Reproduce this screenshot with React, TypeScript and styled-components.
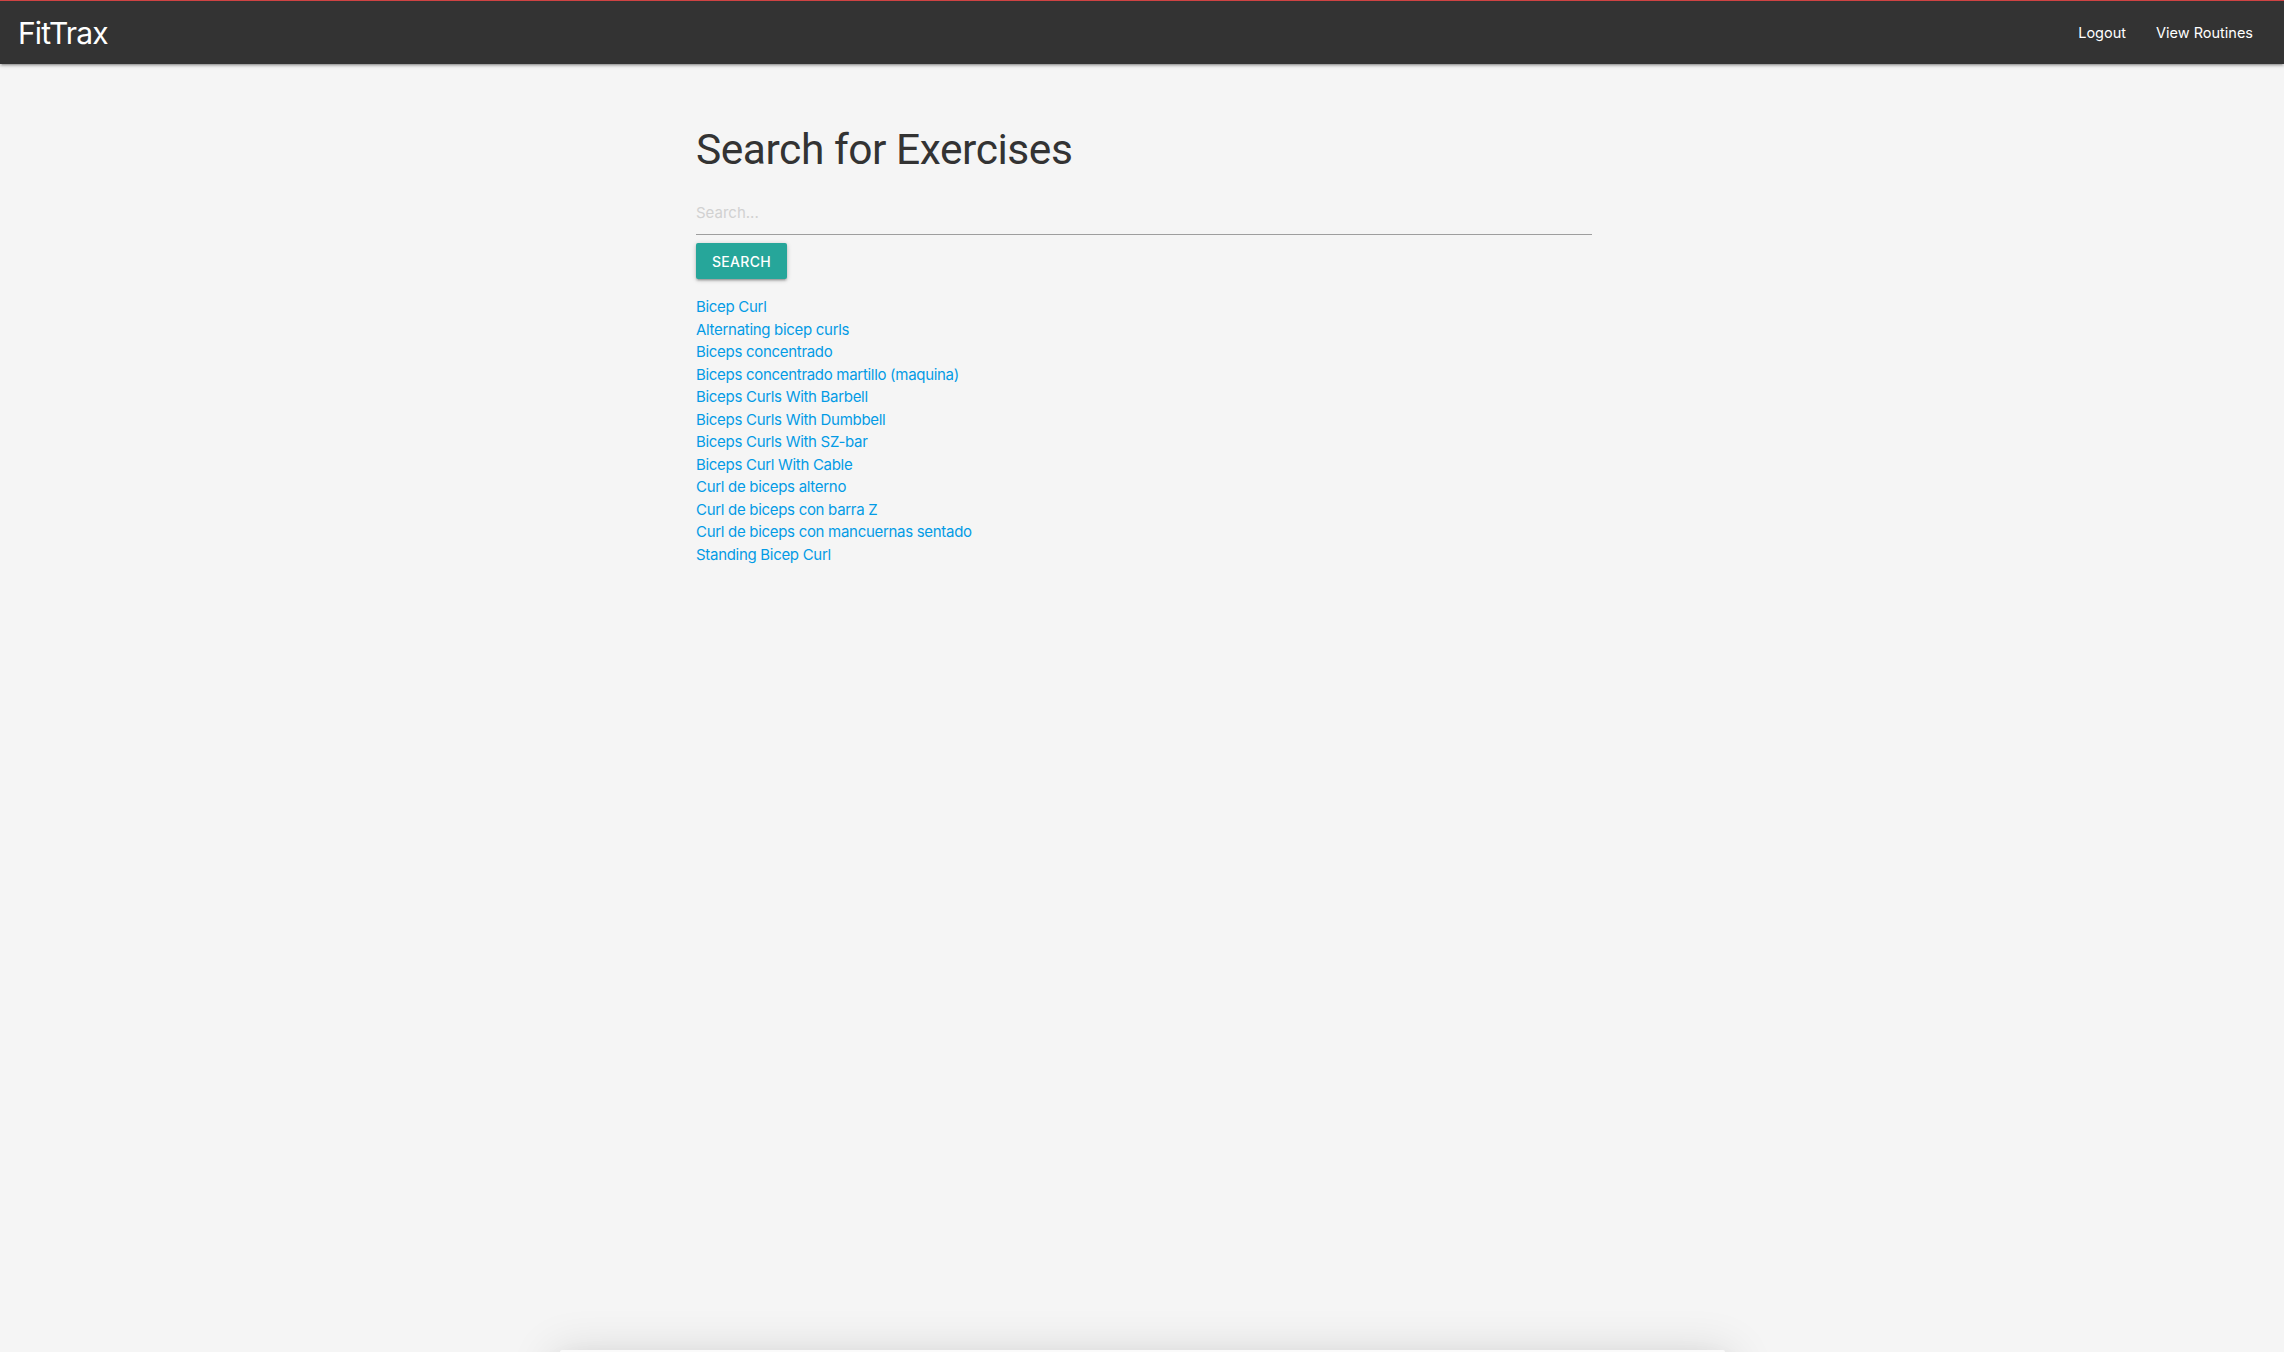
import React, { useState } from 'react';
import styled, { createGlobalStyle } from 'styled-components';

const GlobalStyle = createGlobalStyle`
    html, body {
        margin: 0;
        padding: 0;
        background: #f5f5f5;
        font-family: Inter, "Noto Sans", Roboto, sans-serif;
        font-size: 15px;
        color: rgba(0, 0, 0, 0.87);
    }
    * {
        box-sizing: border-box;
    }
`;

const Nav = styled.nav`
    height: 64px;
    background: #333333;
    border-top: 1px solid #cf4343;
    display: flex;
    align-items: center;
    justify-content: space-between;
    padding: 0 16px 0 18px;
    box-shadow: 0 2px 2px 0 rgba(0, 0, 0, 0.14), 0 3px 1px -2px rgba(0, 0, 0, 0.12), 0 1px 5px 0 rgba(0, 0, 0, 0.2);
    position: relative;
    z-index: 2;
`;

const Brand = styled.a`
    color: #ffffff;
    font-size: 30px;
    font-weight: 400;
    text-decoration: none;
    letter-spacing: -0.9px;
`;

const NavLinks = styled.ul`
    list-style: none;
    margin: 0;
    padding: 0;
    display: flex;
`;

const NavLink = styled.a`
    display: block;
    color: #ffffff;
    font-size: 14.5px;
    padding: 0 15px;
    line-height: 64px;
    text-decoration: none;
`;

const Container = styled.main`
    width: 896px;
    margin-left: calc(50% - 446px);
    padding-top: 62px;
`;

const Title = styled.h4`
    font-family: Roboto, Inter, sans-serif;
    font-size: 42.5px;
    font-weight: 400;
    line-height: 48px;
    letter-spacing: -0.45px;
    color: #333333;
    margin: 0 0 16px 0;
`;

const SearchInput = styled.input`
    display: block;
    width: 100%;
    height: 45px;
    border: none;
    border-bottom: 1px solid #9e9e9e;
    background: transparent;
    font-family: inherit;
    font-size: 15px;
    color: #333;
    outline: none;
    padding: 0;
    margin: 0 0 8px 0;
    &::placeholder {
        color: #d1d1d1;
    }
`;

const Button = styled.button`
    height: 36px;
    padding: 0 16px;
    border: none;
    border-radius: 2px;
    background: #26a69a;
    color: #ffffff;
    font-family: inherit;
    font-size: 14px;
    font-weight: 500;
    letter-spacing: 0.3px;
    text-transform: uppercase;
    cursor: pointer;
    box-shadow: 0 2px 2px 0 rgba(0, 0, 0, 0.14), 0 3px 1px -2px rgba(0, 0, 0, 0.12), 0 1px 5px 0 rgba(0, 0, 0, 0.2);
`;

const ResultList = styled.ul`
    list-style: none;
    margin: 17px 0 0 0;
    padding: 0;
`;

const ResultItem = styled.li`
    line-height: 22.5px;
`;

const ResultLink = styled.a`
    color: #039be5;
    font-size: 15px;
    letter-spacing: -0.3px;
    text-decoration: none;
`;

const HiddenModal = styled.div`
    position: fixed;
    top: 1350px;
    left: 50%;
    width: 1165px;
    height: 400px;
    margin-left: -582px;
    background: #fafafa;
    border-radius: 2px;
    box-shadow: 0 24px 38px 3px rgba(0, 0, 0, 0.14), 0 9px 46px 8px rgba(0, 0, 0, 0.12), 0 11px 15px -7px rgba(0, 0, 0, 0.2);
`;

const exercises = [
    'Bicep Curl',
    'Alternating bicep curls',
    'Biceps concentrado',
    'Biceps concentrado martillo (maquina)',
    'Biceps Curls With Barbell',
    'Biceps Curls With Dumbbell',
    'Biceps Curls With SZ-bar',
    'Biceps Curl With Cable',
    'Curl de biceps alterno',
    'Curl de biceps con barra Z',
    'Curl de biceps con mancuernas sentado',
    'Standing Bicep Curl',
];

const App: React.FC = () => {
    const [query, setQuery] = useState('');

    return (
        <>
            <GlobalStyle />
            <Nav>
                <Brand href="#">FitTrax</Brand>
                <NavLinks>
                    <li><NavLink href="#">Logout</NavLink></li>
                    <li><NavLink href="#">View Routines</NavLink></li>
                </NavLinks>
            </Nav>

            <Container>
                <Title>Search for Exercises</Title>
                <SearchInput
                    placeholder="Search..."
                    value={query}
                    onChange={(e) => setQuery(e.target.value)}
                />
                <Button>Search</Button>
                <ResultList>
                    {exercises.map((name) => (
                        <ResultItem key={name}>
                            <ResultLink href="#">{name}</ResultLink>
                        </ResultItem>
                    ))}
                </ResultList>
            </Container>

            <HiddenModal />
        </>
    );
};

export default App;
